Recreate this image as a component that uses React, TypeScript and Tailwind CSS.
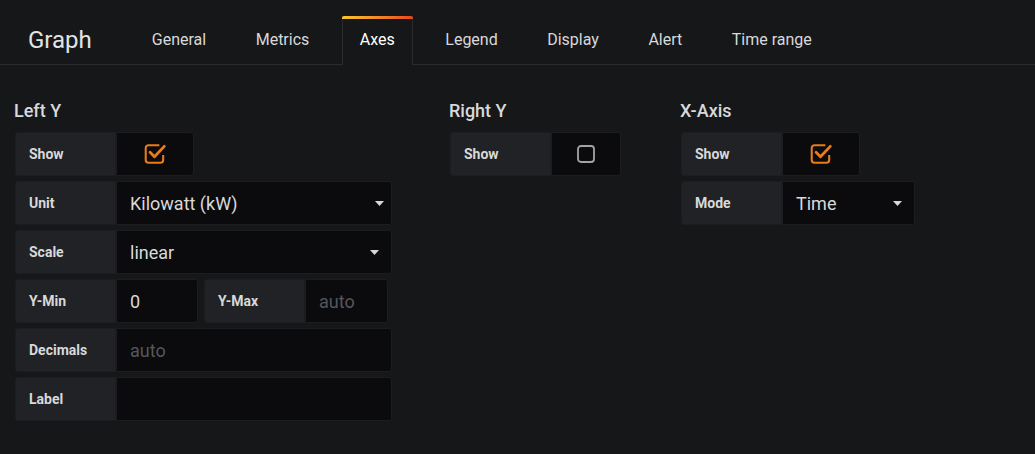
import React from 'react';

const FONT = { fontFamily: 'Roboto, "Noto Sans", sans-serif' };

const TABS = ['General', 'Metrics', 'Axes', 'Legend', 'Display', 'Alert', 'Time range'];

function Caret() {
    return (
        <svg width="9" height="5" viewBox="0 0 9 5" className="shrink-0">
            <path d="M0 0 L9 0 L4.5 5 Z" fill="#d8d9da" />
        </svg>
    );
}

function CheckBox({ checked }: { checked: boolean }) {
    if (!checked) {
        return (
            <svg width="20" height="20" viewBox="0 0 20 20">
                <rect x="2" y="2" width="16" height="16" rx="3" fill="none" stroke="#a2a3a5" strokeWidth="1.8" />
            </svg>
        );
    }
    return (
        <svg width="24" height="24" viewBox="0 0 22 22">
            <path d="M15 3 H5 a2.5 2.5 0 0 0 -2.5 2.5 V16.5 a2.5 2.5 0 0 0 2.5 2.5 H16 a2.5 2.5 0 0 0 2.5 -2.5 V12" fill="none" stroke="#eb7b18" strokeWidth="1.9" />
            <path d="M6.5 9.5 L10.5 13.5 L19.5 4" fill="none" stroke="#eb7b18" strokeWidth="2.6" strokeLinecap="round" strokeLinejoin="round" />
        </svg>
    );
}

function Label({ text }: { text: string }) {
    return (
        <div className="w-[101px] h-full flex items-center pl-[13px] bg-[#212225] border border-[#1c1d20] rounded-l-[3px] text-[14px] font-bold text-[#d8d9da] shrink-0">
            {text}
        </div>
    );
}

function Field({ width, children }: { width: string; children?: React.ReactNode }) {
    return (
        <div className={`${width} h-full flex items-center bg-[#0b0b0d] border border-[#1c1d20] rounded-r-[3px] text-[18px] text-[#d8d9da]`}>
            {children}
        </div>
    );
}

function Row({ children }: { children: React.ReactNode }) {
    return <div className="flex h-[44px] pl-[1px]">{children}</div>;
}

export default function App() {
    return (
        <div className="w-[1035px] h-[454px] bg-[#161719] overflow-hidden" style={FONT}>
            {/* Header with tabs */}
            <div className="h-[65px] flex items-end border-b border-[#2a2b2e] bg-[#161719]">
                <div className="h-[48px] flex items-center pl-[28px] mr-[43px] text-[24px] text-[#e3e4e5] pb-[1px]">Graph</div>
                <div className="flex gap-[15.5px] h-[49px] -mb-[1px]">
                    {TABS.map((t) => {
                        const active = t === 'Axes';
                        return (
                            <div
                                key={t}
                                className={
                                    active
                                        ? 'relative px-[17px] flex items-center text-[16px] text-white bg-[#161719] border-x border-[#2a2b2e]'
                                        : 'px-[17px] flex items-center text-[16px] text-[#d8d9da]'
                                }
                            >
                                {active && (
                                    <div className="absolute top-0 -left-px -right-px h-[3px] bg-gradient-to-r from-[#f9c628] via-[#f2892a] to-[#e4461c] rounded-t-[2px]" />
                                )}
                                <span className="pb-[1px]">{t}</span>
                            </div>
                        );
                    })}
                </div>
            </div>

            {/* Axes editor */}
            <div className="flex pl-[14px] pt-[35px]">
                <div className="w-[435px]">
                    <div className="text-[18px] font-medium text-[#d8d9da] h-[22px] leading-[22px] mb-[10px]">Left Y</div>
                    <div className="flex flex-col gap-[5px]">
                        <Row>
                            <Label text="Show" />
                            <Field width="w-[78px] justify-center">
                                <CheckBox checked />
                            </Field>
                        </Row>
                        <Row>
                            <Label text="Unit" />
                            <Field width="w-[276px] justify-between pl-[13px] pr-[7px]">
                                <span>Kilowatt (kW)</span>
                                <Caret />
                            </Field>
                        </Row>
                        <Row>
                            <Label text="Scale" />
                            <Field width="w-[276px] justify-between pl-[13px] pr-[12px]">
                                <span>linear</span>
                                <Caret />
                            </Field>
                        </Row>
                        <Row>
                            <Label text="Y-Min" />
                            <Field width="w-[82px] pl-[13px]">
                                <span>0</span>
                            </Field>
                            <div className="w-[6px]" />
                            <Label text="Y-Max" />
                            <Field width="w-[83px] pl-[13px]">
                                <span className="text-[#55575b]">auto</span>
                            </Field>
                        </Row>
                        <Row>
                            <Label text="Decimals" />
                            <Field width="w-[276px] pl-[13px]">
                                <span className="text-[#55575b]">auto</span>
                            </Field>
                        </Row>
                        <Row>
                            <Label text="Label" />
                            <Field width="w-[276px]" />
                        </Row>
                    </div>
                </div>

                <div className="w-[231px]">
                    <div className="text-[18px] font-medium text-[#d8d9da] h-[22px] leading-[22px] mb-[10px]">Right Y</div>
                    <Row>
                        <Label text="Show" />
                        <Field width="w-[70px] justify-center">
                            <CheckBox checked={false} />
                        </Field>
                    </Row>
                </div>

                <div className="w-[300px]">
                    <div className="text-[18px] font-medium text-[#d8d9da] h-[22px] leading-[22px] mb-[10px]">X-Axis</div>
                    <div className="flex flex-col gap-[5px]">
                        <Row>
                            <Label text="Show" />
                            <Field width="w-[78px] justify-center">
                                <CheckBox checked />
                            </Field>
                        </Row>
                        <Row>
                            <Label text="Mode" />
                            <Field width="w-[133px] justify-between pl-[13px] pr-[12px]">
                                <span>Time</span>
                                <Caret />
                            </Field>
                        </Row>
                    </div>
                </div>
            </div>
        </div>
    );
}
